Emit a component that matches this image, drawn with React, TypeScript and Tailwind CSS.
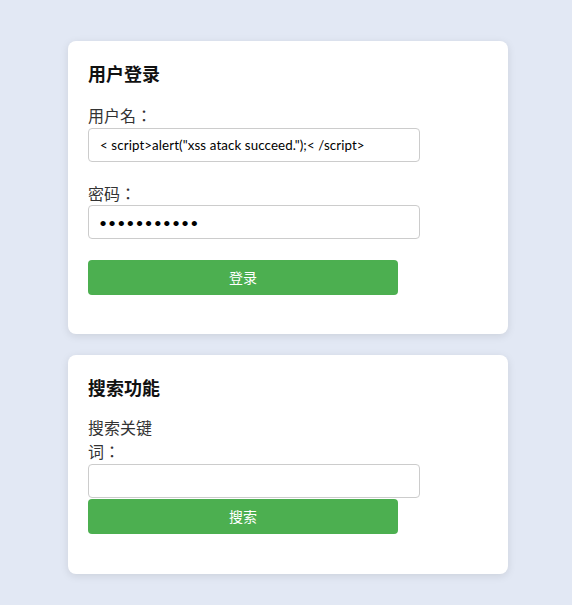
import React from 'react';

const font = { fontFamily: 'Lato, "Noto Sans CJK TC", sans-serif' };

export default function App() {
  return (
    <div className="min-h-[605px] w-full bg-[#e2e8f4] pt-[41px] pl-[68px] pb-[31px]" style={font}>
      {/* 登录卡片 */}
      <div className="w-[440px] bg-white rounded-lg shadow-[0_2px_8px_rgba(0,0,0,0.1)] p-5 mb-[21px]">
        <h2 className="text-[18px] leading-[27px] font-bold text-[#111] mb-4">用户登录</h2>
        <div className="mb-5">
          <label className="block w-[80px] text-base leading-6 text-[#333]">用户名：</label>
          <input
            type="text"
            readOnly
            defaultValue={'< script>alert("xss atack succeed.");< /script>'}
            className="block w-[332px] h-[34px] border border-[#ccc] rounded-[4px] pl-[11px] pr-2 text-[13.333px] tracking-[0.1px] text-black outline-none"
          />
        </div>
        <div className="mb-[21px]">
          <label className="block w-[80px] text-base leading-[23px] text-[#333]">密码：</label>
          <input
            type="password"
            readOnly
            defaultValue="12345678901"
            className="block w-[332px] h-[34px] border border-[#ccc] rounded-[4px] pl-[10px] pr-2 text-[14px] tracking-[1px] text-black outline-none"
          />
        </div>
        <button className="block w-[310px] h-[35px] bg-[#4caf50] text-white text-sm rounded-[4px] mb-[19px]">登录</button>
      </div>

      {/* 搜索卡片 */}
      <div className="w-[440px] bg-white rounded-lg shadow-[0_2px_8px_rgba(0,0,0,0.1)] p-5">
        <h2 className="text-[18px] leading-[27px] font-bold text-[#111] mb-[15px]">搜索功能</h2>
        <label className="block w-[80px] text-base leading-6 text-[#333] -mt-[1px]">搜索关键词：</label>
        <input
          type="text"
          readOnly
          defaultValue=""
          className="block w-[332px] h-[34px] border border-[#ccc] rounded-[4px] pl-[11px] pr-2 text-[13.333px] text-black outline-none"
        />
        <button className="block w-[310px] h-[35px] mt-[1px] bg-[#4caf50] text-white text-sm rounded-[4px] mb-5">搜索</button>
      </div>
    </div>
  );
}
